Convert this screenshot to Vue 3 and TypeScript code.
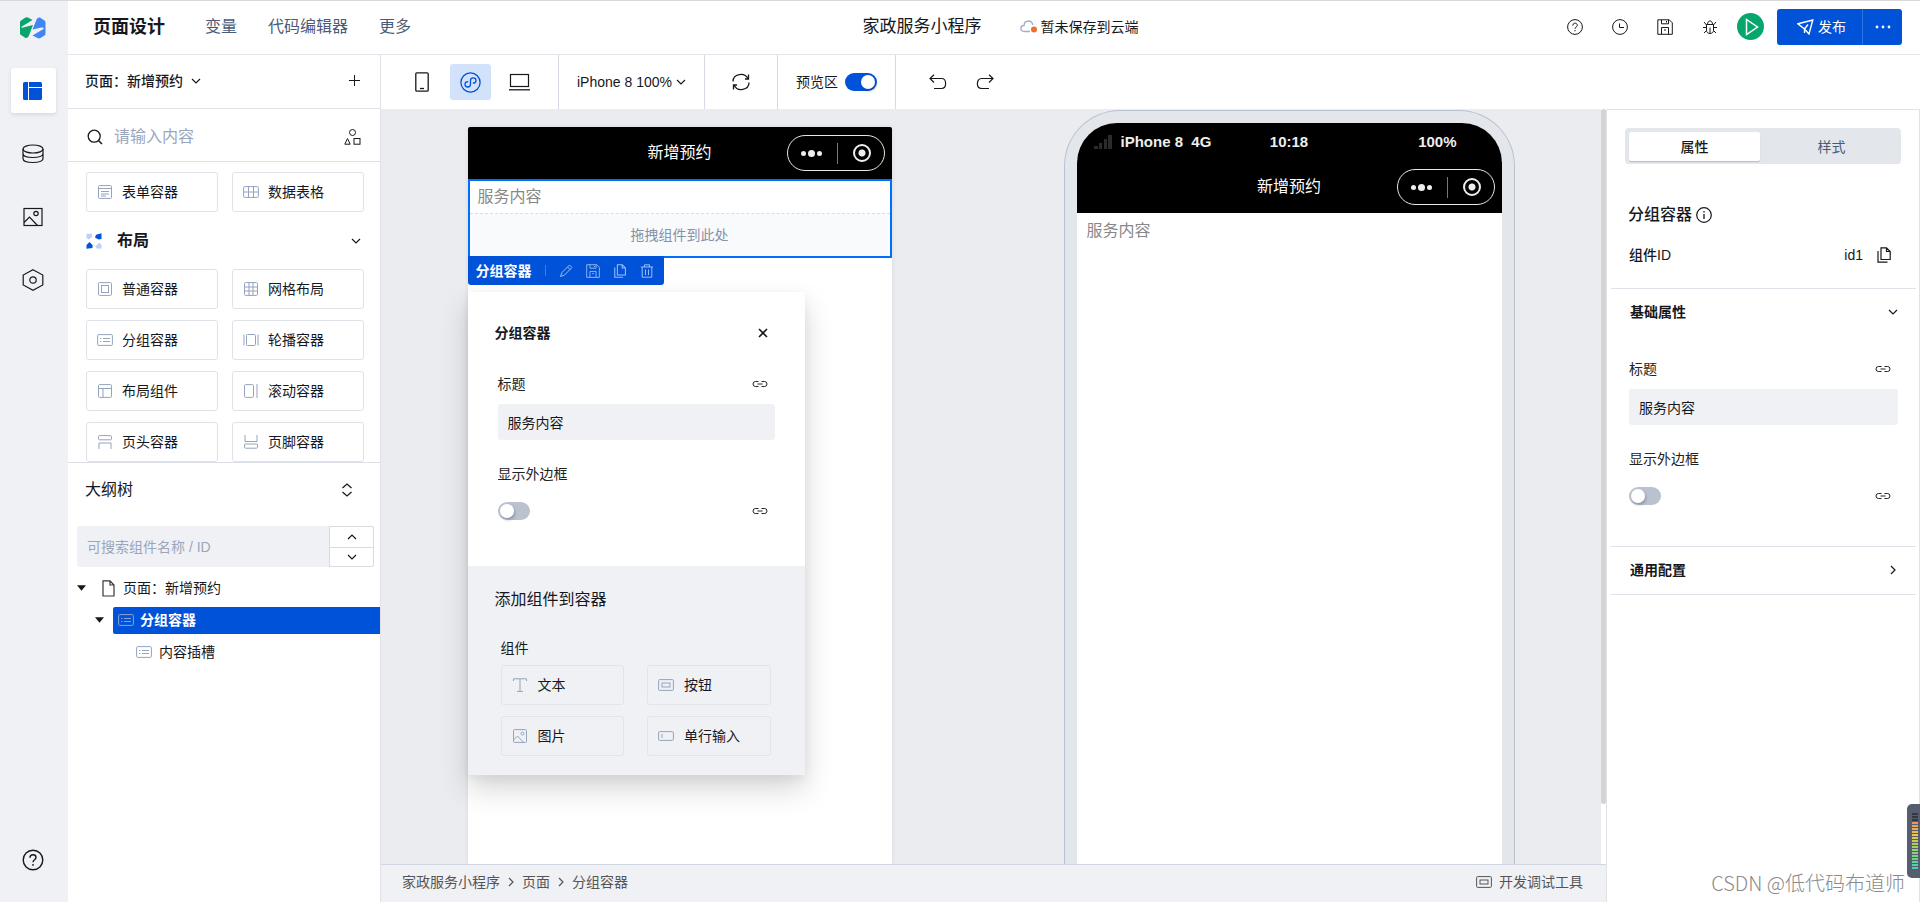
<script setup lang="ts">
import { h, ref } from 'vue'

interface IconDef {
  w: number
  h: number
  body: string
}

const icons: Record<string, IconDef> = {
  layout: { w: 20, h: 18, body: '<g fill="currentColor" stroke="none"><path d="M1.5 0H5v18H1.5A1.5 1.5 0 0 1 0 16.5v-15A1.5 1.5 0 0 1 1.5 0z"/><path d="M6 0h11.500A1.500 1.500 0 0 1 19 1.500V5H6z"/><path d="M6 6h13v10.500a1.500 1.500 0 0 1-1.500 1.500H6z"/></g>' },
  database: { w: 22, h: 20, body: '<ellipse cx="11" cy="5" rx="10" ry="4" stroke-width="1.200"/><path d="M1 5v9.500c0 2.500 4.500 4 10 4s10-1.500 10-4V5M1 9.500c0 2.500 4.500 4 10 4s10-1.500 10-4" stroke-width="1.200"/>' },
  picture: { w: 20, h: 20, body: '<rect x="1" y="1.500" width="18" height="17" stroke-width="1.200"/><circle cx="13" cy="6.500" r="2.200" stroke-width="1.200"/><path d="M1 15.500 6.500 10l8 8.500" stroke-width="1.200"/>' },
  hexagon: { w: 22, h: 22, body: '<path d="M11 .8 20.800 6v10L11 21.200 1.200 16V6z" stroke-width="1.200"/><circle cx="11" cy="11" r="3.200" stroke-width="1.200"/>' },
  helpBig: { w: 22, h: 22, body: '<circle cx="11" cy="11" r="9.800" stroke-width="1.400"/><path d="M8 8.700c0-4 6-3.800 6-.2 0 2.300-3 2.300-3 4.700M11 15v1.700" stroke-width="1.400"/>' },
  help: { w: 16, h: 16, body: '<circle cx="8" cy="8" r="7.400"/><path d="M5.800 6.500c0-3.200 4.500-3 4.500-.2 0 1.800-2.300 1.700-2.300 3.500M8 11v1.300"/>' },
  clock: { w: 16, h: 16, body: '<circle cx="8" cy="8" r="7.400"/><path d="M7.500 4.500v4H12"/>' },
  save: { w: 16, h: 16, body: '<path d="M.8.800h11.500l3 3v11.500H.8z"/><path d="M4.500.8v4h7v-4M4.500 15.200V8.500h7v6.700M9.500 2v1.500M7 11h2"/>' },
  bug: { w: 16, h: 16, body: '<path d="M4.500 5.500h7v6c0 4-7 4-7 0zM5.500 5.300c0-4.500 5-4.500 5 0M8 8.500v6M1 8.500h3.500M11.500 8.500H15M2 3l2.500 3M14 3l-2.500 3M2 14l2.500-2.500M14 14l-2.500-2.500"/>' },
  play: { w: 14, h: 18, body: '<path d="M1.500 1.500 12.500 9l-11 7.500z" stroke-width="1.500"/>' },
  send: { w: 17, h: 16, body: '<path d="M1 4.800 15.800 1 12 15 7.500 10zM7.500 10l3.500-4.500M7.500 10v4" stroke-width="1.400"/>' },
  more: { w: 16, h: 4, body: '<g fill="currentColor" stroke="none"><circle cx="2" cy="2" r="1.400"/><circle cx="8" cy="2" r="1.400"/><circle cx="14" cy="2" r="1.400"/></g>' },
  cloud: { w: 18, h: 13, body: '<path d="M4.500 11.500C-.500 11.500 0 5.500 4 5.500 4.500-.500 12-.500 12.800 5M4.500 11.500H10" stroke="#a3aec2" stroke-width="1.400"/><circle cx="14" cy="9.500" r="3" fill="#f0702c" stroke="none"/>' },
  down: { w: 10, h: 6, body: '<path d="M1 1l4 4 4-4" stroke-width="1.200"/>' },
  up: { w: 10, h: 6, body: '<path d="M1 5l4-4 4 4" stroke-width="1.200"/>' },
  right: { w: 6, h: 10, body: '<path d="M1 1l4 4-4 4" stroke-width="1.200"/>' },
  updown: { w: 12, h: 14, body: '<path d="M1.500 5 6 1l4.500 4M1.500 9 6 13l4.500-4" stroke-width="1.300"/>' },
  plus: { w: 11, h: 11, body: '<path d="M5.500 0v11M0 5.500h11"/>' },
  search: { w: 16, h: 16, body: '<circle cx="7.200" cy="7.200" r="6" stroke-width="1.300"/><path d="M11.500 11.500 15 15" stroke-width="1.500"/>' },
  shapes: { w: 17, h: 16, body: '<circle cx="8.500" cy="3.500" r="3"/><path d="M3.500 9.500.8 15.200h5.400z"/><rect x="10" y="9.500" width="6" height="5.700"/>' },
  phone: { w: 14, h: 20, body: '<rect x=".8" y=".8" width="12.400" height="18.400" rx="1" stroke-width="1.300"/><path d="M5 16.500h4" stroke-width="1.300"/>' },
  mini: { w: 21, h: 21, body: '<circle cx="10.500" cy="10.500" r="9.600" stroke-width="1.300"/><path d="M8.200 9.700c-2.300 0-3.200 1.300-3.200 2.600 0 3.600 5.500 3.600 5.500 0V8.500c0-3.600 5.500-3.600 5.500 0 0 1.500-1 2.700-3.200 2.700" stroke-width="1.300"/>' },
  laptop: { w: 21, h: 18, body: '<rect x="1.500" y="1.500" width="18" height="12" stroke-width="1.200"/><path d="M0 16.800h21" stroke-width="1.300"/>' },
  refresh: { w: 18, h: 18, body: '<path d="M1 8.500C1 1 12.500-1.500 16 6M16.500 1.500V6H13M17 9.500C17 17 5.500 19.500 2 12M1.500 16.500V12H5" stroke-width="1.300"/>' },
  undo: { w: 18, h: 16, body: '<path d="M5 .8 1 4.500l4 4M1 4.500h11.500c5.500 0 5.500 10 0 10H5" stroke-width="1.200"/>' },
  redo: { w: 18, h: 16, body: '<path d="m13 .8 4 3.700-4 4M17 4.500H5.500c-5.500 0-5.500 10 0 10H13" stroke-width="1.200"/>' },
  form: { w: 16, h: 14, body: '<rect x="1.500" y=".6" width="13" height="12.800" rx="1"/><path d="M1.500 3.500h13M4 6.500h8M4 9h8M4 11h5"/>' },
  table: { w: 16, h: 14, body: '<rect x=".6" y="1.600" width="14.800" height="10.800" rx="1"/><path d="M.6 7h14.800M5.500 1.600v10.800M10.500 1.600v10.800"/>' },
  box: { w: 16, h: 14, body: '<rect x="1.500" y=".6" width="13" height="12.800" rx="1"/><rect x="4.500" y="3.500" width="7" height="7"/>' },
  grid: { w: 16, h: 14, body: '<rect x="1.500" y=".6" width="13" height="12.800" rx="1"/><path d="M6 .6v12.800M10 .6v12.800M1.500 5h13M1.500 9h13"/>' },
  group: { w: 16, h: 14, body: '<rect x=".6" y="1.600" width="14.800" height="10.800" rx="1"/><path d="M3 5.500h1.500M3 8.500h1.500M6 5.500h7M6 8.500h7"/>' },
  swiper: { w: 16, h: 14, body: '<rect x="3.500" y="1.500" width="9" height="11" rx="1"/><path d="M1 1.500v11M15 1.500v11"/>' },
  layoutBox: { w: 16, h: 14, body: '<rect x="1.500" y=".6" width="13" height="12.800" rx="1"/><path d="M1.500 4.500h13M6 4.500v9"/>' },
  scroll: { w: 16, h: 14, body: '<rect x="1.500" y=".6" width="9" height="12.800" rx="1"/><path d="M14 0v14"/>' },
  headBox: { w: 16, h: 14, body: '<rect x="1.500" y=".6" width="13" height="4.200" rx="1"/><path d="M2 14V8h12v6"/>' },
  footBox: { w: 16, h: 14, body: '<path d="M2 0v6.500h12V0"/><rect x="1.500" y="9" width="13" height="4.200" rx="1"/>' },
  petals: { w: 16, h: 16, body: '<g stroke="none"><path d="M.5 1 5.500.5 6.500 3.500 2.800 6.500.5 5z" fill="#bdd2fb"/><path d="M15.500.2V6L12.500 6.500 9 4.500 10 1.800z" fill="#0052d9"/><path d="M3.500 9 6.500 12v3L.5 15.800V12z" fill="#0052d9"/><path d="M13.500 9.500 15.500 12v3.500l-4.500.3L9.200 13.500z" fill="#bdd2fb"/></g>' },
  page: { w: 13, h: 17, body: '<path d="M1 .8h7L12 5v11H1zM8 .8V5h4" stroke-width="1.200"/>' },
  caret: { w: 9, h: 6, body: '<path d="M0 .3h9L4.500 5.700z" fill="currentColor" stroke="none"/>' },
  link: { w: 16, h: 8, body: '<path d="M6.500 1.500H3.500a2.500 2.500 0 0 0 0 5h3M9.500 1.500h3a2.500 2.500 0 0 1 0 5h-3M5.500 4h5"/>' },
  close: { w: 10, h: 10, body: '<path d="m1 1 8 8M9 1 1 9" stroke-width="1.600"/>' },
  pencil: { w: 14, h: 14, body: '<path d="M1.500 12.500 3 8.500 10.500 1l2.500 2.500L5.500 11zM8.500 3l2.500 2.500"/>' },
  copy: { w: 14, h: 16, body: '<path d="M4 .8h5.500L13.200 4.500v8H4zM9.500.8v3.700h3.700M1 4v11.200h9.500" stroke-width="1.200"/>' },
  trash: { w: 14, h: 14, body: '<path d="M.8 3h12.400M4.500 3V.8h5V3M2.200 3v10.200h9.600V3M5.500 5.500v5.500M8.500 5.500v5.500"/>' },
  info: { w: 16, h: 16, body: '<circle cx="8" cy="8" r="7.300" stroke-width="1.200"/><path d="M8 7v5M8 4v1.400" stroke-width="1.300"/>' },
  text: { w: 16, h: 14, body: '<path d="M1.500 3V.8h13V3M8 .8v12.400M5 13.400h6"/>' },
  button: { w: 16, h: 14, body: '<rect x=".6" y="1.600" width="14.800" height="10.800" rx="1"/><rect x="4" y="5" width="8" height="4"/>' },
  image: { w: 16, h: 14, body: '<rect x="1.500" y=".6" width="13" height="12.800" rx="1"/><circle cx="10.500" cy="4.500" r="1.500"/><path d="M1.500 11 5.500 7l6 6.400"/>' },
  input: { w: 16, h: 14, body: '<rect x=".6" y="2.600" width="14.800" height="8.800" rx="1"/><path d="M4 5v4"/>' },
  signal: { w: 18, h: 14, body: '<g fill="currentColor" stroke="none"><path d="M0 11h4v3H0zM5 8h3v6H5zM10 4h3v10h-3zM14 0h4v14h-4z"/></g>' },
  logo: { w: 26, h: 22, body: '<g stroke="none"><path d="M0 5.200Q0 4 1 3.500L5.500.6Q7 0 8.500.7L12.500 3 1.500 9.800Q.5 11 3 10.600L13 8 8.800 19Q7.500 21.500 5.500 21L1 18Q0 17.500 0 16.500z" fill="#07a56b"/><path d="M25.500 5.200Q25.500 4 24.500 3.500L20 .6Q18 0 16.800 2L12.500 12.500l9-2Q24.500 10 23.500 12L12.500 18.500l5 2.600q1.500.6 3-.1l4-2.500q1-.5 1-1.800z" fill="#4285f4"/></g>' },
}

const Icon = (props: { name: string }) => {
  const def = icons[props.name]
  return h('svg', {
    width: def.w,
    height: def.h,
    viewBox: `0 0 ${def.w} ${def.h}`,
    fill: 'none',
    stroke: 'currentColor',
    'aria-hidden': 'true',
    innerHTML: def.body,
  })
}
Icon.props = ['name']

const navItems = ['变量', '代码编辑器', '更多']
const railItems = [
  { icon: 'layout', label: '页面' },
  { icon: 'database', label: '数据源' },
  { icon: 'picture', label: '素材' },
  { icon: 'hexagon', label: '设置' },
]
const headerTools = [
  { icon: 'help', label: '帮助' },
  { icon: 'clock', label: '历史' },
  { icon: 'save', label: '保存' },
  { icon: 'bug', label: '调试' },
]
const devices = [
  { icon: 'phone', label: '手机' },
  { icon: 'mini', label: '小程序' },
  { icon: 'laptop', label: '电脑' },
]
const topComponents = [
  { icon: 'form', name: '表单容器' },
  { icon: 'table', name: '数据表格' },
]
const layoutComponents = [
  { icon: 'box', name: '普通容器' },
  { icon: 'grid', name: '网格布局' },
  { icon: 'group', name: '分组容器' },
  { icon: 'swiper', name: '轮播容器' },
  { icon: 'layoutBox', name: '布局组件' },
  { icon: 'scroll', name: '滚动容器' },
  { icon: 'headBox', name: '页头容器' },
  { icon: 'footBox', name: '页脚容器' },
]
const addComponents = [
  { icon: 'text', name: '文本' },
  { icon: 'button', name: '按钮' },
  { icon: 'image', name: '图片' },
  { icon: 'input', name: '单行输入' },
]
const quickActions = [
  { icon: 'pencil', label: '编辑' },
  { icon: 'save', label: '存为模板' },
  { icon: 'copy', label: '复制' },
  { icon: 'trash', label: '删除' },
]

const activeRail = ref(0)
const activeDevice = ref(1)
const activeTab = ref('属性')
const previewOn = ref(true)
const groupTitle = ref('服务内容')
const showBorder = ref(false)
const keyword = ref('')
const outlineKeyword = ref('')
</script>

<template>
  <div class="app">
    <aside class="rail">
      <Icon name="logo" class="logo" />
      <button
        v-for="(item, i) in railItems"
        :key="item.icon"
        class="rail-btn"
        :class="{ active: activeRail === i }"
        :aria-label="item.label"
        @click="activeRail = i"
      >
        <Icon :name="item.icon" />
      </button>
      <button class="rail-btn rail-help" aria-label="帮助"><Icon name="helpBig" /></button>
    </aside>

    <div class="main">
      <header class="header">
        <div class="header-left">
          <h1>页面设计</h1>
          <nav>
            <a v-for="item in navItems" :key="item" href="#">{{ item }}</a>
          </nav>
        </div>
        <div class="header-mid">
          <span class="project">家政服务小程序</span>
          <span class="cloud"><Icon name="cloud" />暂未保存到云端</span>
        </div>
        <div class="header-right">
          <div class="header-tools">
            <button v-for="t in headerTools" :key="t.icon" :aria-label="t.label"><Icon :name="t.icon" /></button>
          </div>
          <button class="play" aria-label="运行"><Icon name="play" /></button>
          <div class="publish">
            <button class="publish-main"><Icon name="send" />发布</button>
            <button class="publish-more" aria-label="更多操作"><Icon name="more" /></button>
          </div>
        </div>
      </header>

      <div class="body">
        <section class="left">
          <div class="page-head">
            <button class="page-pick">页面：新增预约<Icon name="down" /></button>
            <button aria-label="新建页面"><Icon name="plus" /></button>
          </div>
          <div class="search-row">
            <Icon name="search" />
            <input v-model="keyword" type="text" placeholder="请输入内容" aria-label="搜索组件" />
            <button aria-label="组件分类"><Icon name="shapes" /></button>
          </div>
          <div class="components">
            <div class="card-grid">
              <button v-for="c in topComponents" :key="c.name" class="card"><Icon :name="c.icon" />{{ c.name }}</button>
            </div>
            <button class="category"><Icon name="petals" /><span>布局</span><Icon name="down" /></button>
            <div class="card-grid">
              <button v-for="c in layoutComponents" :key="c.name" class="card"><Icon :name="c.icon" />{{ c.name }}</button>
            </div>
          </div>
          <div class="outline">
            <div class="outline-head">
              <span>大纲树</span>
              <button aria-label="展开"><Icon name="updown" /></button>
            </div>
            <div class="outline-search">
              <input v-model="outlineKeyword" type="text" placeholder="可搜索组件名称 / ID" aria-label="搜索大纲" />
              <div class="stepper">
                <button aria-label="上一个"><Icon name="up" /></button>
                <button aria-label="下一个"><Icon name="down" /></button>
              </div>
            </div>
            <ul class="tree">
              <li class="row level-0"><Icon name="caret" /><span class="node"><Icon name="page" />页面：新增预约</span></li>
              <li class="row level-1"><Icon name="caret" /><span class="node selected"><Icon name="group" />分组容器</span></li>
              <li class="row level-2"><span class="node"><Icon name="group" />内容插槽</span></li>
            </ul>
          </div>
        </section>

        <div class="workspace">
          <div class="toolbar">
            <div class="seg devices">
              <button
                v-for="(d, i) in devices"
                :key="d.icon"
                :class="{ active: activeDevice === i }"
                :aria-label="d.label"
                @click="activeDevice = i"
              >
                <Icon :name="d.icon" />
              </button>
            </div>
            <div class="seg"><button class="zoom">iPhone 8 100%<Icon name="down" /></button></div>
            <div class="seg reload"><button aria-label="刷新"><Icon name="refresh" /></button></div>
            <label class="seg preview-switch">预览区<input v-model="previewOn" class="switch" type="checkbox" /></label>
            <div class="history">
              <button aria-label="撤销"><Icon name="undo" /></button>
              <button aria-label="重做"><Icon name="redo" /></button>
            </div>
          </div>

          <div class="work-row">
            <div class="center">
              <div class="stage-wrap">
                <div class="stage">
                  <div class="editor">
                    <div class="nav-bar">
                      <span>新增预约</span>
                      <div class="capsule"><i class="dots"><b></b><b></b><b></b></i><i class="bar"></i><i class="ring"></i></div>
                    </div>
                    <div class="group-block">
                      <div class="group-title">{{ groupTitle }}</div>
                      <div class="drop">拖拽组件到此处</div>
                      <div class="tag">
                        <strong>分组容器</strong>
                        <i class="tag-sep"></i>
                        <button v-for="a in quickActions" :key="a.icon" :aria-label="a.label"><Icon :name="a.icon" /></button>
                      </div>
                    </div>

                    <div class="popover">
                      <div class="pop-head">
                        <strong>分组容器</strong>
                        <button aria-label="关闭"><Icon name="close" /></button>
                      </div>
                      <div class="form pop-form">
                        <div class="field"><label for="pop-title">标题</label><button aria-label="绑定标题"><Icon name="link" /></button></div>
                        <input id="pop-title" v-model="groupTitle" class="text-input" type="text" />
                        <label class="toggle-label" for="pop-border">显示外边框</label>
                        <div class="field toggle-row">
                          <input id="pop-border" v-model="showBorder" class="switch" type="checkbox" />
                          <button aria-label="绑定边框"><Icon name="link" /></button>
                        </div>
                      </div>
                      <div class="pop-add">
                        <h2>添加组件到容器</h2>
                        <h3>组件</h3>
                        <div class="card-grid add-grid">
                          <button v-for="c in addComponents" :key="c.name" class="card"><Icon :name="c.icon" />{{ c.name }}</button>
                        </div>
                      </div>
                    </div>
                  </div>

                  <div class="device">
                    <div class="screen">
                      <div class="status">
                        <span class="carrier"><Icon name="signal" />iPhone 8&nbsp; 4G</span>
                        <span>10:18</span>
                        <span class="battery">100%</span>
                      </div>
                      <div class="nav-bar">
                        <span>新增预约</span>
                        <div class="capsule"><i class="dots"><b></b><b></b><b></b></i><i class="bar"></i><i class="ring"></i></div>
                      </div>
                      <div class="screen-text">{{ groupTitle }}</div>
                    </div>
                  </div>
                </div>
                <div class="scroll-track"><div class="scroll-thumb"></div></div>
              </div>
              <footer class="footer">
                <div class="crumbs">
                  <a href="#">家政服务小程序</a><Icon name="right" /><a href="#">页面</a><Icon name="right" /><a href="#">分组容器</a>
                </div>
                <button class="devtools"><Icon name="button" />开发调试工具</button>
              </footer>
            </div>

            <aside class="props">
              <div class="tabs">
                <button v-for="t in ['属性', '样式']" :key="t" :class="{ active: activeTab === t }" @click="activeTab = t">{{ t }}</button>
              </div>
              <h2 class="props-title">分组容器<Icon name="info" /></h2>
              <div class="id-row"><strong>组件ID</strong><span>id1</span><button aria-label="复制ID"><Icon name="copy" /></button></div>
              <section class="props-section">
                <button class="section-head">基础属性<Icon name="down" /></button>
                <div class="form props-form">
                  <div class="field"><label for="prop-title">标题</label><button aria-label="绑定标题"><Icon name="link" /></button></div>
                  <input id="prop-title" v-model="groupTitle" class="text-input" type="text" />
                  <label class="toggle-label" for="prop-border">显示外边框</label>
                  <div class="field toggle-row">
                    <input id="prop-border" v-model="showBorder" class="switch" type="checkbox" />
                    <button aria-label="绑定边框"><Icon name="link" /></button>
                  </div>
                </div>
              </section>
              <section class="props-section last">
                <button class="section-head">通用配置<span class="arrow"><Icon name="right" /></span></button>
              </section>
            </aside>
          </div>
        </div>
      </div>
    </div>

    <div class="meter"><i></i></div>
    <div class="watermark">CSDN @低代码布道师</div>
  </div>
</template>

<style>
body {
  margin: 0;
}
</style>

<style scoped>
.app {
  position: relative;
  display: flex;
  height: 100vh;
  box-sizing: border-box;
  overflow: hidden;
  border-top: 1px solid #d8d8d8;
  background: #fff;
  color: #16181d;
  font: 14px/20px 'Liberation Sans', 'Noto Sans CJK SC', sans-serif;
}
.app *,
.app *::before {
  box-sizing: border-box;
}
button {
  display: flex;
  align-items: center;
  padding: 0;
  border: 0;
  background: none;
  color: inherit;
  font: inherit;
  cursor: pointer;
}
input {
  margin: 0;
  border: 0;
  background: none;
  color: inherit;
  font: inherit;
  outline: 0;
}
input::placeholder {
  color: #9aa6bc;
  opacity: 1;
}
a {
  color: inherit;
  text-decoration: none;
}
h1,
h2,
h3 {
  margin: 0;
  font-weight: 400;
}
svg {
  display: block;
  flex: none;
}

.rail {
  display: flex;
  flex: none;
  flex-direction: column;
  align-items: center;
  gap: 18px;
  width: 68px;
  padding: 16px 2px 20px 0;
  background: #f0f1f5;
}
.logo {
  margin-bottom: 11px;
}
.rail-btn {
  justify-content: center;
  width: 45px;
  height: 45px;
  border-radius: 3px;
}
.rail-btn.active {
  background: #fff;
  color: #0052d9;
  box-shadow: 0 2px 4px rgba(40, 50, 70, 0.12);
}
.rail-help {
  margin-top: auto;
}

.main {
  display: flex;
  flex: 1;
  flex-direction: column;
  min-width: 0;
}
.header {
  display: grid;
  grid-template-columns: 1fr auto 1fr;
  align-items: center;
  flex: none;
  height: 54px;
  padding: 0 18px 2px 25px;
  border-bottom: 1px solid #e4e5eb;
}
.header-left {
  display: flex;
  align-items: center;
  gap: 40px;
}
.header-left h1 {
  font-size: 18px;
  line-height: 24px;
  font-weight: 700;
}
.header-left nav {
  display: flex;
  gap: 31px;
  color: #4b5b76;
  font-size: 16px;
}
.header-mid {
  display: flex;
  align-items: center;
  gap: 38px;
  padding-left: 6px;
}
.project {
  font-size: 17px;
}
.cloud {
  display: flex;
  align-items: center;
  gap: 3px;
}
.header-right {
  display: flex;
  align-items: center;
  justify-content: flex-end;
}
.header-tools {
  display: flex;
  gap: 29px;
}
.play {
  justify-content: center;
  width: 27px;
  height: 27px;
  margin: 0 13px 0 19px;
  padding-left: 2px;
  border-radius: 50%;
  background: #07a66c;
  color: #fff;
}
.publish {
  display: flex;
  height: 36px;
  overflow: hidden;
  border-radius: 3px;
  background: #0052d9;
  color: #fff;
}
.publish-main {
  gap: 4px;
  padding: 0 16px 0 20px;
}
.publish-more {
  justify-content: center;
  width: 40px;
  border-left: 1px solid #2f72e2;
}

.body {
  display: flex;
  flex: 1;
  min-height: 0;
}
.left {
  flex: none;
  width: 313px;
  border-right: 1px solid #e0e2e8;
}
.page-head {
  display: flex;
  align-items: center;
  justify-content: space-between;
  height: 54px;
  padding: 0 20px 2px 17px;
  border-bottom: 1px solid #e0e2e8;
}
.page-pick {
  gap: 8px;
  font-weight: 500;
}
.search-row {
  display: flex;
  align-items: center;
  gap: 11px;
  height: 53px;
  padding: 4px 19px 0;
  border-bottom: 1px solid #e0e2e8;
}
.search-row input {
  flex: 1;
  min-width: 0;
  padding: 0;
  font-size: 16px;
}
.components {
  padding: 10px 16px 0 18px;
}
.card-grid {
  display: grid;
  grid-template-columns: 1fr 1fr;
  gap: 11px 14px;
}
.card {
  gap: 9px;
  height: 40px;
  padding-left: 10px;
  border: 1px solid #dfe2e8;
  border-radius: 3px;
}
.card svg {
  color: #94a3be;
}
.category {
  gap: 15px;
  width: 100%;
  height: 57px;
  padding-right: 3px;
  font-size: 16px;
  font-weight: 700;
}
.category svg:last-child {
  margin-left: auto;
}
.outline {
  border-top: 1px solid #dcdfe6;
}
.outline-head {
  display: flex;
  align-items: center;
  justify-content: space-between;
  height: 54px;
  padding: 0 27px 0 17px;
  font-size: 16px;
}
.outline-search {
  display: flex;
  height: 41px;
  margin: 9px 6px 5px 9px;
}
.outline-search input {
  flex: 1;
  min-width: 0;
  padding: 0 10px;
  border-radius: 3px 0 0 3px;
  background: #f0f1f5;
}
.stepper {
  display: grid;
  grid-template-rows: 1fr 1fr;
  width: 45px;
  border: 1px solid #d9dbe0;
  border-radius: 0 2px 2px 0;
}
.stepper button {
  justify-content: center;
}
.stepper button + button {
  border-top: 1px solid #d9dbe0;
}
.tree {
  margin: 0;
  padding: 0;
  list-style: none;
}
.row {
  display: flex;
  align-items: center;
  height: 32px;
}
.node {
  display: flex;
  flex: 1;
  align-items: center;
  gap: 8px;
  height: 27px;
}
.node svg {
  color: #33363d;
}
.level-0 {
  gap: 16px;
  padding-left: 9px;
}
.level-1 {
  gap: 9px;
  padding-left: 27px;
}
.level-2 {
  padding-left: 68px;
}
.level-2 .node {
  gap: 7px;
}
.level-2 .node svg {
  color: #94a3be;
}
.node.selected {
  gap: 6px;
  padding-left: 5px;
  border-radius: 2px 0 0 2px;
  background: #0052d9;
  color: #fff;
  font-weight: 700;
}
.node.selected svg {
  color: #8ba3d0;
}

.workspace {
  display: flex;
  flex: 1;
  flex-direction: column;
  min-width: 0;
}
.toolbar {
  display: flex;
  flex: none;
  height: 54px;
}
.seg {
  display: flex;
  align-items: center;
  padding: 0 18px;
  border-right: 1px solid #d6dae4;
}
.devices {
  gap: 8px;
  padding-left: 20px;
}
.devices button {
  justify-content: center;
  width: 41px;
  height: 36px;
  border-radius: 3px;
}
.devices button.active {
  background: #d3e2fb;
  color: #0052d9;
}
.zoom {
  gap: 4px;
}
.reload {
  padding: 0 27px;
}
.preview-switch {
  gap: 7px;
}
.history {
  display: flex;
  align-items: center;
  gap: 29px;
  padding-left: 33px;
}
.switch {
  position: relative;
  width: 32px;
  height: 18px;
  border-radius: 9px;
  background: #bac2cf;
  appearance: none;
  cursor: pointer;
}
.switch::before {
  content: '';
  position: absolute;
  top: 2px;
  left: 2px;
  width: 14px;
  height: 14px;
  border-radius: 50%;
  background: #fff;
  box-shadow: 1px 2px 3px rgba(40, 50, 70, 0.3);
}
.switch:checked {
  background: #0052d9;
}
.switch:checked::before {
  right: 2px;
  left: auto;
}

.work-row {
  display: flex;
  flex: 1;
  min-height: 0;
}
.center {
  display: flex;
  flex: 1;
  flex-direction: column;
  min-width: 0;
}
.stage-wrap {
  display: flex;
  flex: 1;
  min-height: 0;
}
.stage {
  display: flex;
  flex: 1;
  justify-content: center;
  gap: 172px;
  min-width: 0;
  overflow: hidden;
  background: #ebecf0;
}
.scroll-track {
  flex: none;
  width: 5px;
  height: 100%;
}
.scroll-thumb {
  height: 92%;
  border-radius: 3px;
  background: #d4d4d4;
}
.editor {
  position: relative;
  flex: none;
  width: 424px;
  margin-top: 18px;
  border-radius: 2px 2px 0 0;
  background: #fff;
  box-shadow: 0 0 4px rgba(40, 50, 70, 0.1);
}
.nav-bar {
  position: relative;
  display: flex;
  align-items: center;
  justify-content: center;
  height: 52px;
  border-radius: 2px 2px 0 0;
  background: #000;
  color: #fff;
  font-size: 16px;
}
.screen .nav-bar {
  border-radius: 0;
}
.capsule {
  position: absolute;
  top: 8px;
  right: 7px;
  display: flex;
  align-items: center;
  justify-content: space-between;
  width: 98px;
  height: 36px;
  padding: 0 13px;
  border: 1px solid #e8e8e8;
  border-radius: 18px;
}
.dots {
  display: flex;
  align-items: center;
  gap: 2px;
}
.dots b {
  width: 5px;
  height: 5px;
  border-radius: 50%;
  background: #eee;
}
.dots b:nth-child(2) {
  width: 7px;
  height: 7px;
}
.bar {
  width: 1px;
  height: 21px;
  background: #777;
}
.ring {
  width: 18px;
  height: 18px;
  border: 2px solid #eee;
  border-radius: 50%;
  background: radial-gradient(circle, #eee 3px, transparent 4px);
}
.group-block {
  position: relative;
  border: 2px solid #006eff;
}
.group-title {
  height: 33px;
  padding-left: 8px;
  border-bottom: 1px dashed #dcdcdc;
  color: #888;
  font-size: 16px;
  line-height: 32px;
}
.drop {
  height: 42px;
  background: #f9fafc;
  color: #8791a5;
  line-height: 42px;
  text-align: center;
}
.tag {
  position: absolute;
  top: 75px;
  left: -2px;
  display: flex;
  align-items: center;
  height: 29px;
  gap: 13px;
  padding: 0 10px 0 8px;
  border-radius: 0 0 3px 3px;
  background: #0052d9;
  color: #fff;
}
.tag-sep {
  width: 1px;
  height: 11px;
  background: #3d7ce4;
}
.tag button {
  justify-content: center;
  width: 14px;
  color: #9dbdf3;
}
.tag svg {
  width: 14px;
  height: 14px;
}
.popover {
  position: absolute;
  top: 165px;
  left: 0;
  width: 337px;
  border-radius: 3px 3px 0 0;
  background: #fff;
  box-shadow: 0 14px 30px rgba(0, 0, 0, 0.16), 0 4px 12px rgba(0, 0, 0, 0.06);
}
.pop-head {
  display: flex;
  align-items: center;
  justify-content: space-between;
  padding: 31px 37px 29px 27px;
}
.form {
  display: flex;
  flex-direction: column;
}
.pop-form {
  padding: 0 30px 46px;
}
.field {
  display: flex;
  align-items: center;
  justify-content: space-between;
  height: 24px;
  padding-right: 7px;
  color: #222;
}
.text-input {
  height: 36px;
  margin: 8px 0 22px;
  padding: 0 10px;
  border-radius: 3px;
  background: #f0f1f5;
}
.toggle-label {
  color: #222;
  line-height: 24px;
}
.toggle-row {
  height: 18px;
  margin-top: 16px;
}
.pop-add {
  padding: 22px 34px 19px 33px;
  background: #f0f1f5;
}
.pop-add h2 {
  margin-left: -6px;
  font-size: 16px;
  line-height: 24px;
}
.pop-add h3 {
  margin: 24px 0 5px;
  font-size: 14px;
  line-height: 24px;
}
.add-grid {
  gap: 11px 23px;
}
.add-grid .card {
  gap: 10px;
  border-color: #e2e4e9;
}

.device {
  flex: none;
  width: 451px;
  margin-top: 1px;
  padding: 12px 12px 0;
  border: 1px solid #b9c2d1;
  border-bottom: 0;
  border-radius: 56px 56px 0 0;
  background: #e3e6eb;
}
.screen {
  height: 100%;
  overflow: hidden;
  border-radius: 40px 40px 0 0;
  background: #fff;
}
.status {
  display: grid;
  grid-template-columns: 1fr auto 1fr;
  align-items: center;
  height: 38px;
  padding: 0 17px;
  background: #000;
  color: #eee;
  font-size: 15px;
  font-weight: 700;
}
.carrier {
  display: flex;
  align-items: center;
  gap: 9px;
}
.carrier svg {
  color: #2c2c2c;
}
.battery {
  padding-right: 28px;
  text-align: right;
}
.screen-text {
  padding: 8px 10px;
  color: #888;
  font-size: 16px;
}
.footer {
  display: flex;
  align-items: center;
  justify-content: space-between;
  flex: none;
  height: 38px;
  padding: 0 23px 4px 21px;
  border-top: 1px solid #d0d6e2;
  background: #f0f1f5;
  color: #555;
}
.crumbs {
  display: flex;
  align-items: center;
  gap: 8px;
}
.devtools {
  gap: 7px;
}

.props {
  flex: none;
  width: 314px;
  border: 1px solid #e0e2e8;
  border-bottom: 0;
}
.tabs {
  display: grid;
  grid-template-columns: 1fr 1fr;
  gap: 6px;
  height: 36px;
  margin: 18px;
  padding: 4px 4px 3px;
  border-radius: 4px;
  background: #e3e6eb;
}
.tabs button {
  justify-content: center;
  border-radius: 2px;
  color: #4b5b76;
}
.tabs button.active {
  background: #fff;
  color: #16181d;
  font-weight: 500;
  box-shadow: 0 1px 1px #b5bcc8;
}
.props-title {
  display: flex;
  align-items: center;
  gap: 4px;
  height: 36px;
  margin: 33px 0 4px;
  padding-left: 21px;
  font-size: 16px;
  font-weight: 500;
}
.id-row {
  display: flex;
  align-items: center;
  gap: 14px;
  height: 36px;
  margin-bottom: 15px;
  padding: 0 28px 0 22px;
}
.id-row strong {
  flex: 1;
  font-weight: 500;
}
.props-section {
  margin: 0 3px 0 4px;
  border-top: 1px solid #dfe2e9;
}
.props-section.last {
  border-bottom: 1px solid #dfe2e9;
}
.section-head {
  justify-content: space-between;
  width: 100%;
  height: 47px;
  padding: 0 18px 2px 19px;
  font-weight: 700;
}
.arrow {
  padding-right: 2px;
}
.props-form {
  padding: 21px 18px 41px;
}

.meter {
  position: absolute;
  right: 0;
  bottom: 24px;
  width: 13px;
  height: 74px;
  padding: 8px 2px 8px 5px;
  border-radius: 5px 0 0 5px;
  background: #565d70;
}
.meter i {
  display: block;
  height: 100%;
  background:
    repeating-linear-gradient(#565d70 0 1px, transparent 1px 3px),
    linear-gradient(#333845 0 17%, #f0935a 18%, #e8c84a 40%, #9fd06a 62%, #3fd0b8);
}
.watermark {
  position: absolute;
  right: 15px;
  bottom: 7px;
  color: #8a8a8a;
  font: 300 20px/24px 'Noto Sans CJK SC', sans-serif;
}
</style>
